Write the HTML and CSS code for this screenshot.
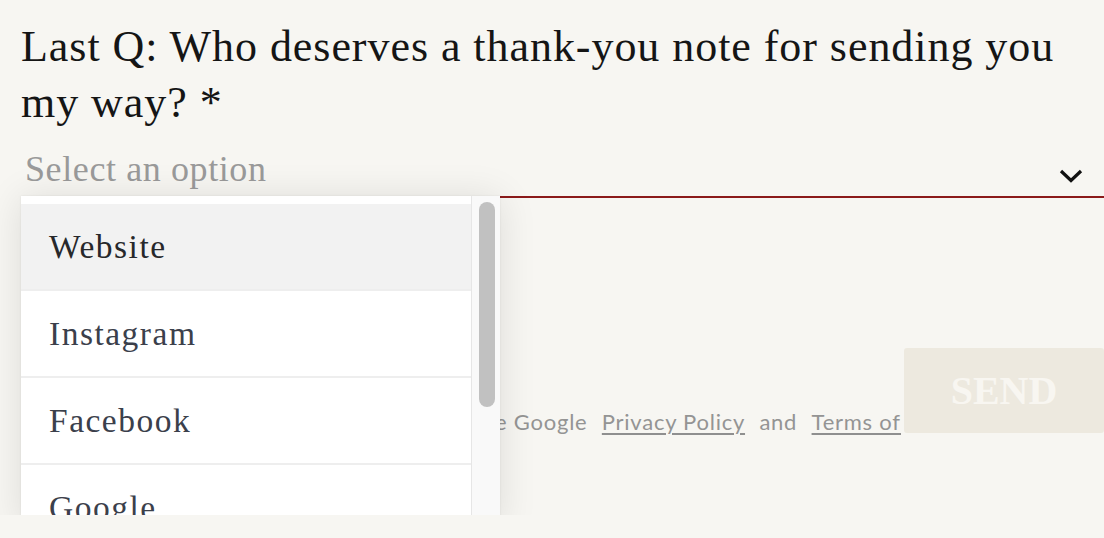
FILE: index.html
```html
<!DOCTYPE html>
<html lang="en">
<head>
<meta charset="utf-8">
<title>Contact form</title>
<link rel="stylesheet" href="styles.css">
</head>
<body>
<div class="page">
  <form class="form">
    <h1 class="question">Last Q: Who deserves a thank-you note for sending you my way? *</h1>
    <div class="select">
      <div class="select-field">
        <span class="placeholder">Select an option</span>
        <svg class="chevron" width="24" height="14" viewBox="0 0 24 14" aria-hidden="true"><polyline points="2,2 12,11.5 22,2" fill="none" stroke="#111" stroke-width="3.2" stroke-linecap="butt" stroke-linejoin="miter"/></svg>
      </div>
      <div class="dropdown">
        <ul class="options">
          <li class="option is-active">Website</li>
          <li class="option">Instagram</li>
          <li class="option">Facebook</li>
          <li class="option">Google</li>
          <li class="option">Referral</li>
        </ul>
        <div class="scrollbar"><div class="thumb"></div></div>
      </div>
    </div>
    <div class="actions">
      <p class="notice">This site is protected by reCAPTCHA and the Google <a href="#">Privacy Policy</a> and <a href="#">Terms of Service</a> apply.</p>
      <button type="button" class="send">SEND</button>
    </div>
  </form>
</div>
</body>
</html>
```

FILE: styles.css
```css
html, body {
  margin: 0;
  padding: 0;
  background: #f7f6f2;
}

.page {
  height: 515px;
  overflow: hidden;
  background: #f7f6f2;
}

.form {
  display: flex;
  flex-direction: column;
  padding: 19px 0 0 21px;
  margin: 0;
}

.question {
  margin: 0;
  font-family: "Liberation Serif", "Times New Roman", serif;
  font-weight: 400;
  font-size: 44px;
  line-height: 56px;
  letter-spacing: 0.95px;
  color: #151515;
}

.select {
  position: relative;
  margin-top: 18px;
}

.select-field {
  display: flex;
  align-items: flex-end;
  justify-content: space-between;
  padding: 0 21px 7px 4px;
  border-bottom: 2px solid #8b1a1a;
}

.placeholder {
  font-family: "Liberation Serif", "Times New Roman", serif;
  font-size: 36px;
  line-height: 40px;
  letter-spacing: 0.6px;
  color: #9a9a9a;
}

.chevron {
  display: block;
  margin-bottom: 6px;
}

.dropdown {
  position: absolute;
  top: calc(100% - 2px);
  left: 0;
  width: 479px;
  height: 330px;
  display: flex;
  background: #ffffff;
  box-shadow: 0 0 2px rgba(0, 0, 0, 0.08), 0 2px 36px rgba(0, 0, 0, 0.11);
  z-index: 2;
}

.options {
  list-style: none;
  margin: 0;
  padding: 8px 0 0;
  width: 450px;
  flex: none;
}

.option {
  display: flex;
  align-items: center;
  height: 85px;
  padding-left: 28px;
  border-bottom: 2px solid #eeeeee;
  font-family: "Liberation Serif", "Times New Roman", serif;
  font-size: 33.5px;
  line-height: 40px;
  letter-spacing: 1.5px;
  color: #3b404b;
  background: #ffffff;
}

.option.is-active {
  background: #f2f2f2;
  color: #27282b;
}

.scrollbar {
  flex: 1;
  border-left: 1px solid #e6e6e6;
  background: #f9f9f9;
  padding: 6px 0 0 7px;
}

.thumb {
  width: 16px;
  height: 205px;
  border-radius: 8px;
  background: #c1c1c1;
}

.actions {
  display: flex;
  align-items: flex-end;
  margin-top: 150px;
}

.notice {
  flex: 1;
  min-width: 0;
  margin: 0 0 -6px;
  padding-bottom: 6px;
  overflow: hidden;
  white-space: nowrap;
  text-indent: 22px;
  font-family: Lato, "Open Sans", sans-serif;
  font-size: 22px;
  line-height: 22px;
  letter-spacing: 0.75px;
  color: #949494;
}

.notice a {
  color: #949494;
  text-decoration: underline;
  text-decoration-color: #8f8f8f;
  text-decoration-thickness: 1.5px;
  text-underline-offset: 3px;
  margin: 0 8px;
}

.send {
  flex: none;
  width: 200px;
  height: 85px;
  margin-left: 3px;
  border: 0;
  border-radius: 3px;
  background: #ede9df;
  color: #f8f6f1;
  font-family: "Liberation Serif", "Times New Roman", serif;
  font-weight: 700;
  font-size: 40px;
  letter-spacing: 0;
  padding: 0;
}
```
